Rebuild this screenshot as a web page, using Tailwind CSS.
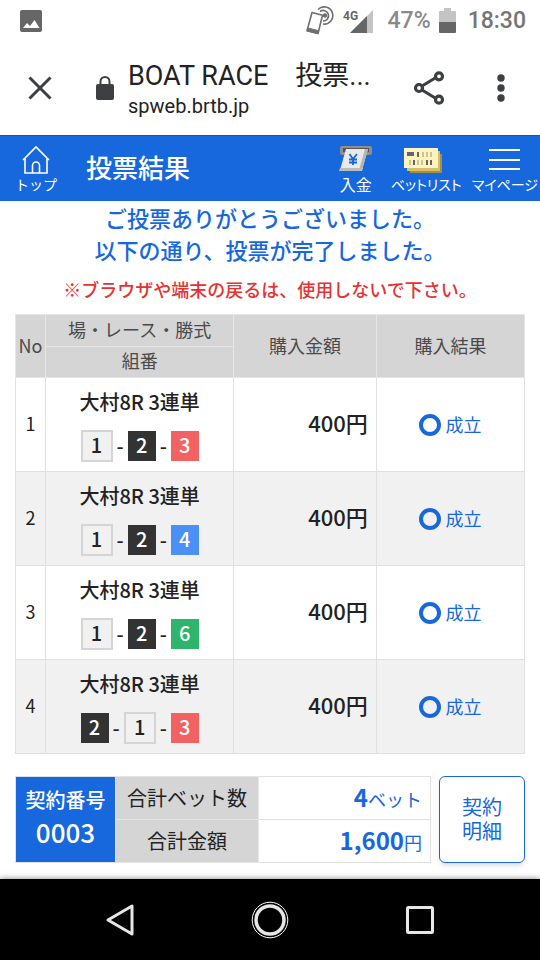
<!DOCTYPE html>
<html lang="ja">
<head>
    <meta charset="UTF-8">
    <meta name="viewport" content="width=device-width, initial-scale=1.0">
    <title>BOAT RACE 投票結果</title>
    <script src="https://cdn.jsdelivr.net/npm/@tailwindcss/browser@4"></script>
</head>
<body class="min-h-screen flex flex-col bg-white text-[#222] font-['Noto_Sans_CJK_JP',sans-serif]">
    <!-- status bar -->
    <div class="flex items-center justify-between h-[42px] pl-5 pr-3.5 font-[Roboto,sans-serif] text-[23px] leading-6 text-[#757575]">
        <svg class="w-[22px] h-[22px]" viewBox="0 0 22 22">
            <rect width="22" height="22" rx="2" fill="#666"/>
            <path d="M3 18l4-5 3 3 4.500-6 5 8z" fill="#fff"/>
        </svg>
        <div class="flex items-center">
            <svg class="w-[30px] h-[30px] mr-2" viewBox="0 0 30 30" fill="none" stroke="#707070">
                <circle cx="20" cy="9.500" r="2.200" fill="#707070" stroke="none"/>
                <path d="M15 5.500a5.300 5.300 0 1 1 3 9.500" stroke-width="1.600"/>
                <path d="M13 3.500a8.600 8.600 0 1 1 5 14.500" stroke-width="1.600"/>
                <path d="M7 6.500l10.500 2.700-4.500 18.300-11-2.800z" stroke-width="1.600" stroke-linejoin="round" fill="#fff"/>
                <path d="M2.800 22l11 2.700-.8 3-11-2.800z" fill="#707070"/>
            </svg>
            <svg class="w-[31px] h-[26px] mr-3.5" viewBox="0 0 31 26">
                <path d="M7 25L30 2v23z" fill="#c4c4c4"/>
                <path d="M7 25L24 8v17z" fill="#666"/>
                <text x="0" y="12" font-family="Roboto" font-size="12" font-weight="700" fill="#666">4G</text>
            </svg>
            <span class="font-medium text-[#8a8a8a]">47%</span>
            <svg class="w-[17px] h-[26px] ml-2 mr-3" viewBox="0 0 17 26">
                <path d="M5 0h7v3h4q1 0 1 1v10H0V4q0-1 1-1h4z" fill="#c4c4c4"/>
                <path d="M0 14h17v10q0 1-1 1H1q-1 0-1-1z" fill="#666"/>
            </svg>
            <span class="font-medium">18:30</span>
        </div>
    </div>

    <!-- browser toolbar -->
    <div class="flex items-center h-[93px] pl-7 pr-[35px] pb-0.5">
        <button aria-label="閉じる">
            <svg class="w-6 h-6" viewBox="0 0 24 24" stroke="#3c4043" stroke-width="3"><path d="M1.500 1.500l21 21M22.500 1.500l-21 21"/></svg>
        </button>
        <svg class="w-[18px] h-6 ml-11 shrink-0" viewBox="0 0 18 24">
            <rect y="8" width="18" height="16" rx="2" fill="#3c4043"/>
            <path d="M4.500 9V5.500a4.500 4.500 0 0 1 9 0V9" fill="none" stroke="#3c4043" stroke-width="2"/>
        </svg>
        <div class="flex-1 ml-3.5 mt-1 font-[Roboto,'Noto_Sans_CJK_JP',sans-serif]">
            <p class="text-[27px] leading-8 whitespace-nowrap">BOAT RACE　投票...</p>
            <p class="text-xl leading-7">spweb.brtb.jp</p>
        </div>
        <button aria-label="共有">
            <svg class="w-8 h-[34px]" viewBox="0 0 32 34" fill="none" stroke="#3c4043" stroke-width="3.200">
                <path d="M9 15l14-8.500M9 19l14 8.500"/>
                <circle cx="6" cy="17" r="3.500"/><circle cx="26" cy="5.300" r="3.500"/><circle cx="26" cy="28.700" r="3.500"/>
            </svg>
        </button>
        <button class="ml-[52px]" aria-label="メニュー">
            <svg class="w-2 h-7" viewBox="0 0 8 28" fill="#3c4043"><circle cx="4" cy="4" r="3.700"/><circle cx="4" cy="14" r="3.700"/><circle cx="4" cy="24" r="3.700"/></svg>
        </button>
    </div>

    <!-- site header -->
    <header class="flex items-center h-[66px] bg-[#1768dc] border-t border-[#1556b4] pl-4 pr-0.5 text-white">
        <a href="#" class="flex flex-col items-center w-10 text-sm leading-4 whitespace-nowrap">
            <svg class="w-7 h-[29px]" viewBox="0 0 28 29" fill="none" stroke="#fff" stroke-width="1.600">
                <path d="M1 15L14 2l13 13M3 13.500V28h22V13.500"/>
                <path d="M10.500 28V20.500a3.500 3.500 0 0 1 7 0V28"/>
            </svg>
            <span class="mt-0.5">トップ</span>
        </a>
        <h1 class="flex-1 ml-[30px] pb-1 text-[26px] leading-8 font-medium">投票結果</h1>
        <nav class="flex text-sm leading-4 whitespace-nowrap [font-feature-settings:'palt']">
            <a href="#" class="flex flex-col items-center text-base leading-4">
                <svg class="w-[34px] h-[29px]" viewBox="0 0 34 29">
                    <rect x="1" y="1" width="32" height="9" rx="2" fill="#8e8e8e"/>
                    <rect x="4" y="3" width="26" height="4" fill="#555"/>
                    <path d="M7 4h22l-6 21H1z" fill="#e9e9e9"/>
                    <path d="M29 4l-6 21h-3l6-21z" fill="#b5b5b5"/>
                    <path d="M1 23h23l-1 3H0z" fill="#bbb"/>
                    <path d="M10.500 9l3.500 5 4-5M14 14v6M10 14.500h8M10 17.500h8" fill="none" stroke="#1768dc" stroke-width="1.800"/>
                </svg>
                <span class="mt-0.5">入金</span>
            </a>
            <a href="#" class="flex flex-col items-center ml-[18px]">
                <svg class="w-[46px] h-[29px]" viewBox="0 0 46 29">
                    <rect x="7" y="9" width="32" height="19" fill="#a38f3e"/>
                    <rect x="4" y="6" width="33" height="20" fill="#d4c06c"/>
                    <rect x="1" y="3" width="34" height="20" fill="#fff4bf"/>
                    <path d="M4 7h7v4H4zM14 7h2v5h-2zM10 15h2v5h-2zM23 15h2v5h-2zM27 15h2v5h-2z" fill="#666"/>
                    <path d="M19 7h2v5h-2zM23 7h2v5h-2zM27 7h2v5h-2zM6 15h2v5H6zM14 15h2v5h-2zM18 15h2v5h-2z" fill="#cfc48c"/>
                </svg>
                <span class="mt-0.5">ベットリスト</span>
            </a>
            <a href="#" class="flex flex-col items-center ml-2.5">
                <svg class="w-8 h-[29px]" viewBox="0 0 32 29" stroke="#fff" stroke-width="2"><path d="M0 5h31M0 15h31M0 24h31"/></svg>
                <span class="mt-0.5">マイページ</span>
            </a>
        </nav>
    </header>

    <main class="flex-1 px-[15px] pb-4">
        <p class="text-center text-[22px] leading-8 font-medium text-[#1768dc] whitespace-nowrap">ご投票ありがとうございました。<br>以下の通り、投票が完了しました。</p>
        <p class="text-center text-lg leading-6 font-medium text-[#e53232] mt-3 whitespace-nowrap">※ブラウザや端末の戻るは、使用しないで下さい。</p>

        <table class="w-full mt-[13px] table-fixed border-collapse border border-[#e0e0e0]">
            <colgroup>
                <col class="w-[30px]"><col class="w-[37%]"><col class="w-[28%]"><col>
            </colgroup>
            <thead class="bg-[#d5d5d5] text-lg leading-6 text-[#4a4a4a]">
                <tr class="h-8">
                    <th rowspan="2" class="border border-[#e6e6e6] pb-0.5 font-normal">No</th>
                    <th class="border border-[#e6e6e6] pb-1 font-normal">場・レース・勝式</th>
                    <th rowspan="2" class="border border-[#e6e6e6] pb-0.5 font-normal">購入金額</th>
                    <th rowspan="2" class="border border-[#e6e6e6] pb-0.5 font-normal">購入結果</th>
                </tr>
                <tr class="h-[31px]">
                    <th class="border border-[#e6e6e6] pb-1 font-normal">組番</th>
                </tr>
            </thead>
            <tbody id="bets"></tbody>
        </table>

        <div class="flex mt-[22px] gap-2">
            <table class="flex-1 h-[87px] border-collapse">
                <tbody>
                    <tr>
                        <th rowspan="2" class="w-[100px] border border-[#e0e0e0] pb-1 bg-[#1768dc] text-white text-xl leading-8 font-medium">契約番号<br><span class="text-[26px]">0003</span></th>
                        <th class="w-[143px] border border-[#e6e6e6] bg-[#d5d5d5] text-xl leading-7 font-normal">合計ベット数</th>
                        <td class="border border-[#e0e0e0] pr-2 text-right text-lg leading-7 text-[#1768dc]"><b class="text-2xl leading-7 font-bold">4</b>ベット</td>
                    </tr>
                    <tr>
                        <th class="border border-[#e6e6e6] bg-[#d5d5d5] text-xl leading-7 font-normal">合計金額</th>
                        <td class="border border-[#e0e0e0] pr-2 text-right text-lg leading-7 text-[#1768dc]"><b class="text-2xl leading-7 font-bold">1,600</b>円</td>
                    </tr>
                </tbody>
            </table>
            <button class="w-[86px] border border-[#1768dc] rounded-md bg-white shadow-md pb-0.5 text-xl leading-6 text-[#1768dc]">契約<br>明細</button>
        </div>
    </main>

    <!-- android navigation -->
    <footer class="grid grid-cols-3 place-items-center h-[82px] px-[45px] bg-black shadow-[0_0_6px_rgba(0,0,0,0.5)]">
        <button aria-label="戻る">
            <svg class="w-8 h-9" viewBox="0 0 32 36" fill="none" stroke="#e6e6e6" stroke-width="3" stroke-linejoin="round"><path d="M28 4v28L4 18z"/></svg>
        </button>
        <button aria-label="ホーム">
            <svg class="w-[38px] h-[38px]" viewBox="0 0 38 38" fill="none"><circle cx="19" cy="19" r="17.800" stroke="#fff"/><circle cx="19" cy="19" r="14" stroke="#e6e6e6" stroke-width="3.500"/></svg>
        </button>
        <button aria-label="履歴">
            <svg class="w-7 h-7" viewBox="0 0 28 28" fill="none" stroke="#e6e6e6" stroke-width="3"><rect x="1.500" y="1.500" width="25" height="25" rx="1"/></svg>
        </button>
    </footer>

    <script>
        const boats = {
            1: 'w-8 h-8 border-2 border-[#d5d5d5] bg-[#f1f1f1] text-[#222]',
            2: 'w-7 h-[30px] bg-[#333] text-white',
            3: 'w-7 h-[30px] bg-[#f26262] text-white',
            4: 'w-7 h-[30px] bg-[#4a90f7] text-white',
            6: 'w-7 h-[30px] bg-[#2fb46c] text-white',
        };
        const bets = [[1, 2, 3], [1, 2, 4], [1, 2, 6], [2, 1, 3]];

        document.getElementById('bets').innerHTML = bets.map((combo, i) => `
            <tr class="h-[94px] even:bg-[#f1f1f1]">
                <td class="border border-[#e0e0e0] pb-1 text-center text-lg">${i + 1}</td>
                <td class="border border-[#e0e0e0]">
                    <p class="text-center text-xl leading-7 font-medium">大村8R 3連単</p>
                    <div class="flex items-center justify-center gap-1 mt-3.5 text-xl leading-6 font-medium">
                        ${combo.map(n => `<span class="flex items-center justify-center pb-0.5 ${boats[n]}">${n}</span>`).join('<span>-</span>')}
                    </div>
                </td>
                <td class="border border-[#e0e0e0] pr-2 pb-1 text-right text-[22px] font-medium">400円</td>
                <td class="border border-[#e0e0e0]">
                    <div class="flex items-center justify-center gap-1 text-lg leading-6 text-[#1768dc]">
                        <span class="w-[22px] h-[22px] rounded-full border-4 border-[#1768dc]"></span><span class="pb-0.5">成立</span>
                    </div>
                </td>
            </tr>`).join('');
    </script>
</body>
</html>
